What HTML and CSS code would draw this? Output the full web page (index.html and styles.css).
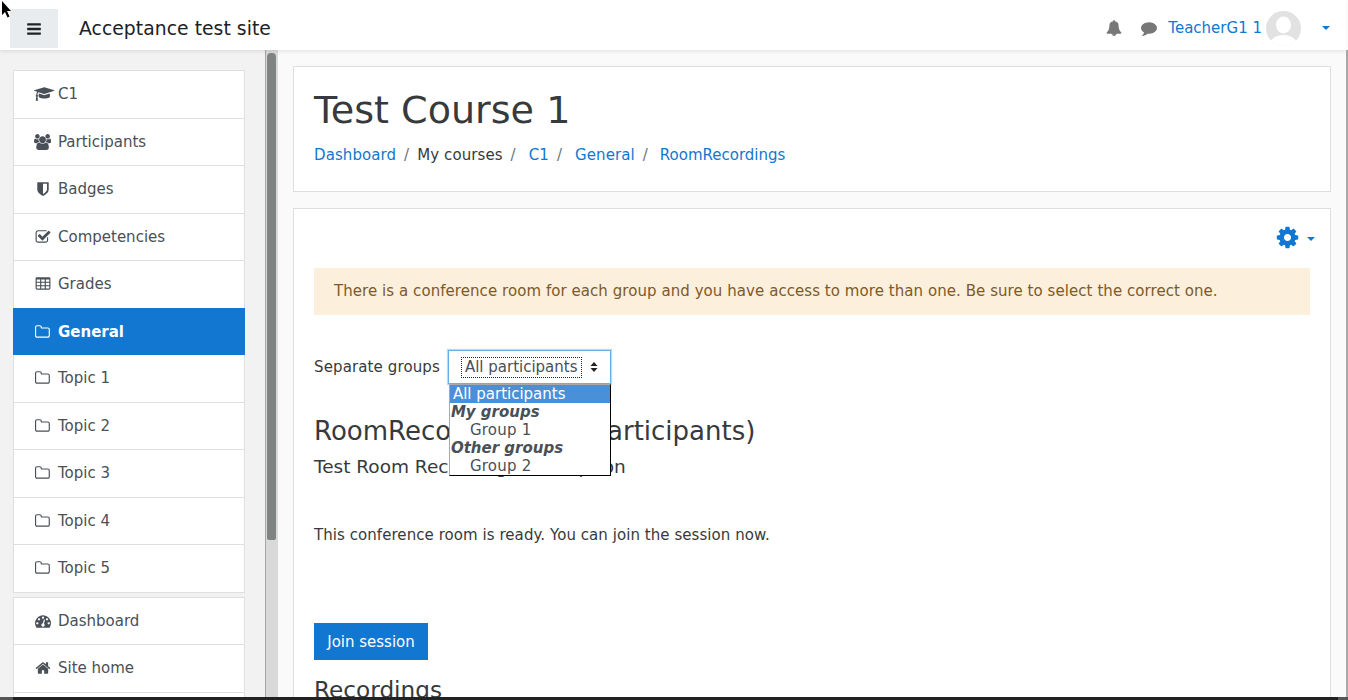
FILE: index.html
```html
<!DOCTYPE html>
<html lang="en">
<head>
<meta charset="utf-8">
<title>Test Course 1</title>
<link rel="stylesheet" href="styles.css">
</head>
<body>
<svg class="defs" width="0" height="0" aria-hidden="true">
<symbol id="i-bars" viewBox="0 0 1792 1792"><path d="M1664 1344v128q0 26-19 45t-45 19h-1408q-26 0-45-19t-19-45v-128q0-26 19-45t45-19h1408q26 0 45 19t19 45zm0-512v128q0 26-19 45t-45 19h-1408q-26 0-45-19t-19-45v-128q0-26 19-45t45-19h1408q26 0 45 19t19 45zm0-512v128q0 26-19 45t-45 19h-1408q-26 0-45-19t-19-45v-128q0-26 19-45t45-19h1408q26 0 45 19t19 45z"/></symbol>
<symbol id="i-bell" viewBox="0 0 1792 1792"><path d="M912 1696q0-16-16-16-59 0-101.5-42.5t-42.5-101.5q0-16-16-16t-16 16q0 73 51.5 124.5t124.5 51.5q16 0 16-16zm816-288q0 52-38 90t-90 38h-448q0 106-75 181t-181 75-181-75-75-181h-448q-52 0-90-38t-38-90q50-42 91-88t85-119.5 74.5-158.5 50-206 19.5-260q0-152 117-282.5t307-158.5q-8-19-8-39 0-40 28-68t68-28 68 28 28 68q0 20-8 39 190 28 307 158.5t117 282.5q0 139 19.5 260t50 206 74.5 158.5 85 119.5 91 88z"/></symbol>
<symbol id="i-comment" viewBox="0 0 1792 1792"><path d="M1792 896q0 174-120 321.5t-326 233-450 85.5q-70 0-145-8-198 175-460 242-49 14-114 22-17 2-30.5-9t-17.5-29v-1q-3-4-.5-12t2-10 4.5-9.5l6-9 7-8.5 8-9q7-8 31-34.5t34.5-38 31-39.5 32.5-51 27-59 26-76q-157-89-247.5-220t-90.5-281q0-130 71-248.5t191-204.5 286-136.5 348-50.5q244 0 450 85.5t326 233 120 321.5z"/></symbol>
<symbol id="i-cog" viewBox="0 0 1792 1792"><path d="M1152 896q0-106-75-181t-181-75-181 75-75 181 75 181 181 75 181-75 75-181zm512-109v222q0 12-8 23t-20 13l-185 28q-19 54-39 91 35 50 107 138 10 12 10 25t-9 23q-27 37-99 108t-94 71q-12 0-26-9l-138-108q-44 23-91 38-16 136-29 186-7 28-36 28h-222q-14 0-24.5-8.5t-11.5-21.5l-28-184q-49-16-90-37l-141 107q-10 9-25 9-14 0-25-11-126-114-165-168-7-10-7-23 0-12 8-23 15-21 51-66.5t54-70.5q-27-50-41-99l-183-27q-13-2-21-12.5t-8-23.5v-222q0-12 8-23t19-13l186-28q14-46 39-92-40-57-107-138-10-12-10-24 0-10 9-23 26-36 98.5-107.5t94.5-71.5q13 0 26 10l138 107q44-23 91-38 16-136 29-186 7-28 36-28h222q14 0 24.5 8.5t11.5 21.5l28 184q49 16 90 37l142-107q9-9 24-9 13 0 25 10 129 119 165 170 7 8 7 22 0 12-8 23-15 21-51 66.5t-54 70.5q26 50 41 98l183 28q13 2 21 12.5t8 23.5z"/></symbol>
<symbol id="i-folder" viewBox="0 0 1792 1792"><path d="M1536 1312v-704q0-40-28-68t-68-28h-704q-40 0-68-28t-28-68v-64q0-40-28-68t-68-28h-320q-40 0-68 28t-28 68v960q0 40 28 68t68 28h1216q40 0 68-28t28-68zm128-704v704q0 92-66 158t-158 66h-1216q-92 0-158-66t-66-158v-960q0-92 66-158t158-66h320q92 0 158 66t66 158v32h672q92 0 158 66t66 158z"/></symbol>
<symbol id="i-home" viewBox="0 0 1792 1792"><path d="M1472 992v480q0 26-19 45t-45 19h-384v-384h-256v384h-384q-26 0-45-19t-19-45v-480q0-1 .5-3t.5-3l575-474 575 474q1 2 1 6zm223-69l-62 74q-8 9-21 11h-3q-13 0-21-7l-692-577-692 577q-12 8-24 7-13-2-21-11l-62-74q-8-10-7-23.5t11-21.5l719-599q32-26 76-26t76 26l244 204v-195q0-14 9-23t23-9h192q14 0 23 9t9 23v408l219 182q10 8 11 21.5t-7 23.5z"/></symbol>
<symbol id="i-table" viewBox="0 0 1792 1792"><path d="M576 1376v-192q0-14-9-23t-23-9h-320q-14 0-23 9t-9 23v192q0 14 9 23t23 9h320q14 0 23-9t9-23zm0-384v-192q0-14-9-23t-23-9h-320q-14 0-23 9t-9 23v192q0 14 9 23t23 9h320q14 0 23-9t9-23zm512 384v-192q0-14-9-23t-23-9h-320q-14 0-23 9t-9 23v192q0 14 9 23t23 9h320q14 0 23-9t9-23zm-512-768v-192q0-14-9-23t-23-9h-320q-14 0-23 9t-9 23v192q0 14 9 23t23 9h320q14 0 23-9t9-23zm512 384v-192q0-14-9-23t-23-9h-320q-14 0-23 9t-9 23v192q0 14 9 23t23 9h320q14 0 23-9t9-23zm512 384v-192q0-14-9-23t-23-9h-320q-14 0-23 9t-9 23v192q0 14 9 23t23 9h320q14 0 23-9t9-23zm-512-768v-192q0-14-9-23t-23-9h-320q-14 0-23 9t-9 23v192q0 14 9 23t23 9h320q14 0 23-9t9-23zm512 384v-192q0-14-9-23t-23-9h-320q-14 0-23 9t-9 23v192q0 14 9 23t23 9h320q14 0 23-9t9-23zm0-384v-192q0-14-9-23t-23-9h-320q-14 0-23 9t-9 23v192q0 14 9 23t23 9h320q14 0 23-9t9-23zm128-320v1088q0 66-47 113t-113 47h-1344q-66 0-113-47t-47-113v-1088q0-66 47-113t113-47h1344q66 0 113 47t47 113z"/></symbol>
<symbol id="i-check" viewBox="0 0 1792 1792"><path d="M1472 930v318q0 119-84.5 203.5t-203.5 84.5h-832q-119 0-203.5-84.5t-84.5-203.5v-832q0-119 84.5-203.5t203.5-84.5h832q63 0 117 25 15 7 18 23 3 17-9 29l-49 49q-10 10-23 10-3 0-9-2-23-6-45-6h-832q-66 0-113 47t-47 113v832q0 66 47 113t113 47h832q66 0 113-47t47-113v-254q0-13 9-22l64-64q10-10 23-10 6 0 12 3 20 8 20 29zm231-489l-814 814q-24 24-57 24t-57-24l-430-430q-24-24-24-57t24-57l110-110q24-24 57-24t57 24l263 263 647-647q24-24 57-24t57 24l110 110q24 24 24 57t-24 57z"/></symbol>
<symbol id="i-users" viewBox="0 0 1920 1792"><path d="M593 896q-162 5-265 128h-134q-82 0-138-40.5t-56-118.5q0-353 124-353 6 0 43.5 21t97.5 42.5 119 21.5q67 0 133-23-5 37-5 66 0 139 81 256zm1071 637q0 120-73 189.5t-194 69.5h-874q-121 0-194-69.5t-73-189.5q0-53 3.5-103.5t14-109 26.5-108.5 43-97.5 62-81 85.5-53.5 111.5-20q10 0 43 21.5t73 48 107 48 135 21.5 135-21.5 107-48 73-48 43-21.5q61 0 111.5 20t85.5 53.5 62 81 43 97.5 26.5 108.5 14 109 3.5 103.5zm-1024-1277q0 106-75 181t-181 75-181-75-75-181 75-181 181-75 181 75 75 181zm704 384q0 159-112.5 271.5t-271.5 112.5-271.5-112.5-112.5-271.5 112.5-271.5 271.5-112.5 271.5 112.5 112.5 271.5zm576 225q0 78-56 118.5t-138 40.5h-134q-103-123-265-128 81-117 81-256 0-29-5-66 66 23 133 23 59 0 119-21.5t97.5-42.5 43.5-21q124 0 124 353zm-128-609q0 106-75 181t-181 75-181-75-75-181 75-181 181-75 181 75 75 181z"/></symbol>
<symbol id="i-cap" viewBox="0 0 2304 1792"><path d="M1774 836l18 316q4 69-82 128t-235 93.5-323 34.5-323-34.5-235-93.5-82-128l18-316 574 181q22 7 48 7t48-7zm530-324q0 23-22 31l-1120 352q-4 1-10 1t-10-1l-652-206q-43 34-71 111.5t-34 178.5q63 36 63 109 0 69-58 107l58 433q2 14-8 25-9 11-24 11h-192q-15 0-24-11-10-11-8-25l58-433q-58-38-58-107 0-73 65-111 11-207 98-330l-333-104q-22-8-22-31t22-31l1120-352q4-1 10-1t10 1l1120 352q22 8 22 31z"/></symbol>
<symbol id="i-gauge" viewBox="0 0 1792 1792"><path d="M384 1152q0-53-37.5-90.5t-90.5-37.5-90.5 37.5-37.5 90.5 37.5 90.5 90.5 37.5 90.5-37.5 37.5-90.5zm192-448q0-53-37.5-90.5t-90.5-37.5-90.5 37.5-37.5 90.5 37.5 90.5 90.5 37.5 90.5-37.5 37.5-90.5zm428 481l101-382q6-26-7.5-48.5t-38.5-29.5-48 6.5-30 39.5l-101 382q-60 5-107 43.5t-63 98.5q-20 77 20 146t117 89 146-20 89-117q16-60-6-117t-72-91zm660-33q0-53-37.5-90.5t-90.5-37.5-90.5 37.5-37.5 90.5 37.5 90.5 90.5 37.5 90.5-37.5 37.5-90.5zm-640-640q0-53-37.5-90.5t-90.5-37.5-90.5 37.5-37.5 90.5 37.5 90.5 90.5 37.5 90.5-37.5 37.5-90.5zm448 192q0-53-37.5-90.5t-90.5-37.5-90.5 37.5-37.5 90.5 37.5 90.5 90.5 37.5 90.5-37.5 37.5-90.5zm320 448q0 261-141 483-19 29-54 29h-1402q-35 0-54-29-141-221-141-483 0-182 71-348t191-286 286-191 348-71 348 71 286 191 191 286 71 348z"/></symbol>
<symbol id="i-shield" viewBox="0 0 1792 1792"><path d="M1344 960v-640h-448v1137q119-63 213-137 235-184 235-360zm192-768v768q0 86-33.5 170.5t-83 150-118 127.5-126.5 103-121 77.5-89.5 49.5-42.5 20q-12 6-26 6t-26-6q-16-7-42.5-20t-89.5-49.5-121-77.5-126.5-103-118-127.5-83-150-33.5-170.5v-768q0-26 19-45t45-19h1152q26 0 45 19t19 45z"/></symbol>
</svg>

<div class="screen">
  <header class="topbar">
    <button class="menu-btn" type="button" aria-label="Menu"><svg class="ico-bars"><use href="#i-bars"/></svg></button>
    <a class="brand">Acceptance test site</a>
    <div class="usernav">
      <svg class="ico-bell"><use href="#i-bell"/></svg>
      <svg class="ico-comment"><use href="#i-comment"/></svg>
      <a class="username">TeacherG1 1</a>
      <svg class="avatar" viewBox="0 0 35 35"><defs><clipPath id="av"><circle cx="17.5" cy="17.5" r="17.5"/></clipPath></defs><g clip-path="url(#av)"><rect width="35" height="35" fill="#e2e2e2"/><ellipse cx="17.5" cy="14" rx="7.5" ry="8.5" fill="#fff"/><ellipse cx="17.5" cy="34" rx="14" ry="10" fill="#fff"/></g></svg>
      <span class="caret nav-caret"></span>
    </div>
  </header>

  <div class="body-row">
    <nav class="sidebar">
      <ul class="list">
        <li class="item"><svg class="ico ico-cap"><use href="#i-cap"/></svg>C1</li>
        <li class="item"><svg class="ico ico-users"><use href="#i-users"/></svg>Participants</li>
        <li class="item"><svg class="ico"><use href="#i-shield"/></svg>Badges</li>
        <li class="item"><svg class="ico"><use href="#i-check"/></svg>Competencies</li>
        <li class="item"><svg class="ico"><use href="#i-table"/></svg>Grades</li>
        <li class="item active"><svg class="ico"><use href="#i-folder"/></svg>General</li>
        <li class="item"><svg class="ico"><use href="#i-folder"/></svg>Topic 1</li>
        <li class="item"><svg class="ico"><use href="#i-folder"/></svg>Topic 2</li>
        <li class="item"><svg class="ico"><use href="#i-folder"/></svg>Topic 3</li>
        <li class="item"><svg class="ico"><use href="#i-folder"/></svg>Topic 4</li>
        <li class="item"><svg class="ico"><use href="#i-folder"/></svg>Topic 5</li>
      </ul>
      <ul class="list list-second">
        <li class="item"><svg class="ico"><use href="#i-gauge"/></svg>Dashboard</li>
        <li class="item"><svg class="ico"><use href="#i-home"/></svg>Site home</li>
        <li class="item">&nbsp;</li>
      </ul>
    </nav>
    <div class="scrollbar"><div class="thumb"></div></div>

    <main class="main">
      <section class="card head-card">
        <h1 class="course-title">Test Course 1</h1>
        <ol class="crumbs">
          <li><a>Dashboard</a></li>
          <li>My courses</li>
          <li><a>C1</a></li>
          <li><a>General</a></li>
          <li class="crumb-last"><a>RoomRecordings</a></li>
        </ol>
      </section>

      <section class="card content-card">
        <div class="actions"><svg class="ico-cog"><use href="#i-cog"/></svg><span class="caret"></span></div>
        <div class="alert">There is a conference room for each group and you have access to more than one. Be sure to select the correct one.</div>
        <div class="group-row">
          <span class="group-label">Separate groups</span>
          <div class="select">
            <span class="select-value">All participants</span>
            <svg class="select-arrows" viewBox="0 0 8 10"><path d="M4 0l3.5 4h-7zM4 10l3.5-4h-7z"/></svg>
            <div class="dropdown">
              <div class="opt selected">All participants</div>
              <div class="optgroup">My groups</div>
              <div class="opt nested">Group 1</div>
              <div class="optgroup">Other groups</div>
              <div class="opt nested">Group 2</div>
            </div>
          </div>
        </div>
        <h2 class="room-title">RoomRecordings (All participants)</h2>
        <h4 class="room-desc">Test Room Recordings description</h4>
        <p class="status">This conference room is ready. You can join the session now.</p>
        <button class="join" type="button">Join session</button>
        <h3 class="recordings">Recordings</h3>
      </section>
    </main>
  </div>

  <div class="taskbar"></div>
</div>
<svg class="pointer" viewBox="0 0 10 17"><path d="M1 0v14l3-3 2.5 5.5 2-1L6 10h4z" fill="#000"/></svg>
</body>
</html>
```

FILE: styles.css
```css
* { box-sizing: border-box; }
html, body { margin: 0; height: 100%; overflow: hidden; }
body {
  font-family: "DejaVu Sans", sans-serif;
  font-size: 15px;
  line-height: 1.5;
  color: #373a3c;
  background: #fff;
}
.defs { position: absolute; }
a { color: #1177d1; }
ul, ol { list-style: none; margin: 0; padding: 0; }

.screen {
  display: flex;
  flex-direction: column;
  width: 1348px;
  height: 700px;
  position: relative;
}
.topbar {
  flex: 0 0 50px;
  display: flex;
  align-items: center;
  padding: 0 16px 0 10px;
  background: #fff;
  box-shadow: 0 2px 4px rgba(0, 0, 0, .08);
  position: relative;
  z-index: 2;
  margin-right: 2px;
}
.menu-btn {
  width: 48px;
  height: 39px;
  border: 0;
  padding: 0;
  background: #e9ecef;
  display: flex;
  align-items: center;
  justify-content: center;
  margin-top: 7px;
  margin-right: 21px;
  fill: #222;
}
.ico-bars { width: 16px; height: 16px; margin-left: -1px; }
.brand { color: #1d2125; font-size: 18.75px; line-height: 1.5; margin-top: 9px; letter-spacing: .05px; }
.usernav { margin-left: auto; display: flex; align-items: center; margin-top: 6px; fill: #777; }
.ico-bell { width: 16px; height: 16px; margin-right: 19px; }
.ico-comment { width: 16px; height: 16px; margin-right: 11px; }
.username { color: #1177d1; margin-right: 4px; }
.avatar { width: 35px; height: 35px; margin-right: 21px; }
.caret {
  display: inline-block;
  border-top: 4.5px solid #1177d1;
  border-left: 4.5px solid transparent;
  border-right: 4.5px solid transparent;
}

.body-row { flex: 1; display: flex; min-height: 0; overflow: hidden; border-right: 2px solid #a8a8a8; }

.sidebar {
  flex: 0 0 266px;
  padding: 20px 20px 0 13px;
  background: #f2f2f2;
  border-right: 1px solid #a6a6a6;
  overflow: hidden;
}
.list { background: #fff; width: 232px; padding-bottom: 1px; }
.list-second { margin-top: 4px; }
.item {
  display: flex;
  align-items: center;
  padding: 12px 20px;
  border: 1px solid #dfdfdf;
  margin-bottom: -1px;
  color: #495057;
  background: #fff;
}
.item.active {
  position: relative;
  z-index: 1;
  padding-bottom: 11px;
  margin-bottom: -1px;
  background: #1177d1;
  border-color: #1177d1;
  color: #fff;
  font-weight: 700;
}
.ico {
  flex: none;
  width: 16px;
  height: 16px;
  margin-left: .5px;
  margin-right: 7.5px;
  fill: #495057;
}
.active .ico { fill: #fff; }
.ico-users { width: 17.1px; margin-left: 0; margin-right: 6.9px; }
.ico-cap { width: 20.6px; margin-left: 0; margin-right: 3.4px; }

.scrollbar { flex: 0 0 12px; background: #d9d9d9; padding: 3px 1px 0 1px; }
.thumb { height: 487px; background: #7f8381; border-radius: 4px 4px 2px 2px; margin-right: 1px; }

.main {
  flex: 1;
  min-width: 0;
  background: #fafafa;
  padding: 16px 15px 0;
  overflow: hidden;
}
.card { background: #fff; border: 1px solid #dfdfdf; padding: 20px; }
.head-card { height: 126px; margin-bottom: 16px; }
.course-title { margin: 0; font-size: 38.1px; font-weight: 400; line-height: 1.2; color: #373a3c; padding-top: 1px; }
.crumbs { display: flex; margin-top: 10px; letter-spacing: .08px; }
.crumbs li { color: #373a3c; }
.crumbs li + li::before { content: "/"; color: #6c757d; padding: 0 8px; }
.crumbs li + li a { margin-left: 5px; }
.crumbs .crumb-last { letter-spacing: 0; }
.crumbs .crumb-last a { margin-left: 4px; }

.content-card { height: 700px; letter-spacing: .06px; }
.actions { display: flex; justify-content: flex-end; align-items: center; height: 22px; margin: -3px -5px 0 0; fill: #1177d1; }
.ico-cog { width: 25px; height: 25px; margin-right: 7px; }
.actions .caret { margin-top: 4px; }
.alert {
  margin-top: 20px;
  padding: 12px 20px;
  background: #fcefdc;
  color: #7d5a29;
}
.group-row { display: flex; align-items: center; margin-top: 35px; }
.group-label { margin-right: 8px; padding-top: 1px; letter-spacing: .12px; }
.select {
  position: relative;
  width: 163px;
  height: 34px;
  border: 1px solid #66afe9;
  box-shadow: 0 0 1px 1px rgba(102, 175, 233, .45);
  background: #fff;
  display: flex;
  align-items: center;
  color: #495057;
  letter-spacing: 0;
}
.select-value { margin: 1px 0 0 13px; outline: 1px dotted #222; padding: 0 3px; line-height: 19px; }
.select-arrows { width: 8px; height: 10px; margin-left: 9px; fill: #222; }
.dropdown {
  position: absolute;
  left: 0;
  top: 33px;
  width: 162px;
  height: 92px;
  background: #fff;
  border: 1px solid #000;
  border-left-color: #a9a9a9;
  border-top-color: #a9a9a9;
  line-height: 18px;
  z-index: 3;
}
.opt { padding-left: 3px; height: 18px; }
.opt.selected { background: #4a90d9; color: #fff; }
.opt.nested { padding-left: 20px; letter-spacing: .25px; }
.optgroup { height: 18px; padding-left: 1px; font-weight: 700; font-style: italic; }
.room-title { margin: 32px 0 0; font-size: 26px; font-weight: 400; line-height: 1.2; letter-spacing: 0; }
.room-desc { margin: 9px 0 0; font-size: 18.5px; font-weight: 400; line-height: 1.2; letter-spacing: 0; }
.status { margin: 46px 0 0; }
.join {
  display: block;
  margin-top: 77px;
  width: 114px;
  height: 37px;
  border: 0;
  padding: 0;
  background: #1177d1;
  color: #fff;
  font: inherit;
  letter-spacing: 0;
}
.recordings { margin: 16px 0 0; font-size: 23.2px; font-weight: 400; line-height: 1.2; letter-spacing: 0; }

.taskbar { flex: 0 0 3px; background: linear-gradient(to right, #555 13px, #222 13px, #222 1338px, #555 1338px); }
.pointer { position: absolute; left: 1px; top: 1px; width: 10px; height: 17px; z-index: 5; }
```
